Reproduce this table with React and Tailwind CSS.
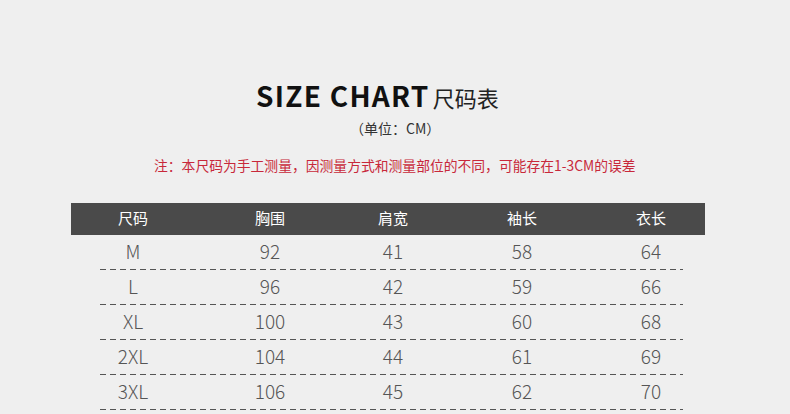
const headers = ["尺码", "胸围", "肩宽", "袖长", "衣长"];

const rows = [
  ["M", "92", "41", "58", "64"],
  ["L", "96", "42", "59", "66"],
  ["XL", "100", "43", "60", "68"],
  ["2XL", "104", "44", "61", "69"],
  ["3XL", "106", "45", "62", "70"],
];

const cols = "grid grid-cols-[124px_150px_96px_162px_96px]";

export default function App() {
  return (
    <div className="h-[414px] w-[790px] overflow-hidden bg-[#efefef] font-['Noto_Sans_CJK_SC',sans-serif] text-[#333]">
      {/* TITLE */}
      <div className="flex items-baseline pl-[256px] pt-[74px]">
        <h1 className="text-[28px] font-bold tracking-[0.045em] text-[#111]">
          SIZE CHART
        </h1>
        <span className="ml-[3px] text-[22px] text-[#222]">尺码表</span>
      </div>

      <p className="mt-[2px] pl-[350px] text-[14px] text-[#333]">
        （单位：CM）
      </p>

      <p className="mt-[16px] pl-[154px] text-[13.8px] text-[#c8283a]">
        注：本尺码为手工测量，因测量方式和测量部位的不同，可能存在1-3CM的误差
      </p>

      {/* TABLE */}
      <div className="ml-[71px] mt-[27px] w-[634px]">
        <div className={`${cols} h-[32px] items-center bg-[#4a4a4a] text-[15px] text-white`}>
          {headers.map((h) => (
            <span key={h} className="text-center">
              {h}
            </span>
          ))}
        </div>

        {rows.map((row) => (
          <div key={row[0]}>
            <div className={`${cols} h-[34px] items-center text-[19px] font-light text-[#555]`}>
              {row.map((v, i) => (
                <span key={i} className="text-center">
                  {v}
                </span>
              ))}
            </div>
            <div className="ml-[29px] h-px w-[583px] bg-[repeating-linear-gradient(to_right,#555_0,#555_6px,transparent_6px,transparent_10px)]" />
          </div>
        ))}
      </div>
    </div>
  );
}
